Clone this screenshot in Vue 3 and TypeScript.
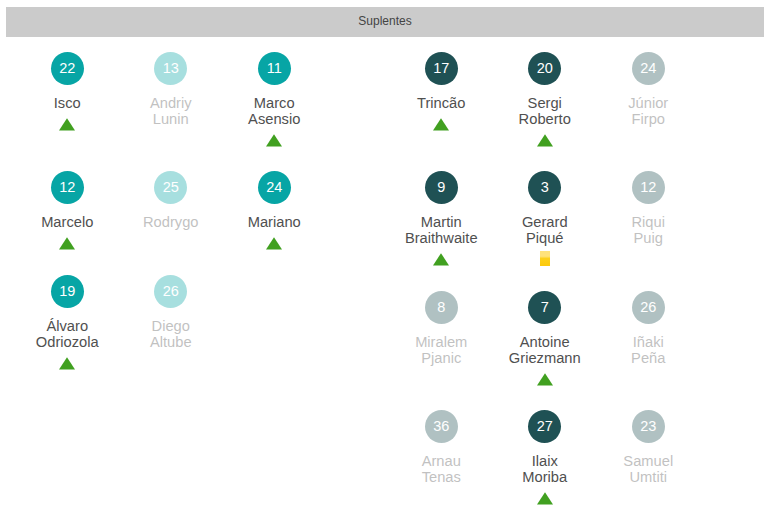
<script setup lang="ts">
type Mark = 'up' | 'card' | 'none'
interface Player { n: number; lines: string[]; mark: Mark }
const p = (n: number, name: string, mark: Mark = 'none'): Player => ({ n, lines: name.split('|'), mark })
const home: Player[] = [
  p(22, 'Isco', 'up'), p(13, 'Andriy|Lunin'), p(11, 'Marco|Asensio', 'up'),
  p(12, 'Marcelo', 'up'), p(25, 'Rodrygo'), p(24, 'Mariano', 'up'),
  p(19, 'Álvaro|Odriozola', 'up'), p(26, 'Diego|Altube'),
]
const away: Player[] = [
  p(17, 'Trincão', 'up'), p(20, 'Sergi|Roberto', 'up'), p(24, 'Júnior|Firpo'),
  p(9, 'Martin|Braithwaite', 'up'), p(3, 'Gerard|Piqué', 'card'), p(12, 'Riqui|Puig'),
  p(8, 'Miralem|Pjanic'), p(7, 'Antoine|Griezmann', 'up'), p(26, 'Iñaki|Peña'),
  p(36, 'Arnau|Tenas'), p(27, 'Ilaix|Moriba', 'up'), p(23, 'Samuel|Umtiti'),
]
const teams = [
  { key: 'home', cls: 'home', players: home },
  { key: 'away', cls: 'away', players: away },
]
</script>

<template>
  <div class="page">
    <div class="title">Suplentes</div>
    <div class="teams">
      <div v-for="t in teams" :key="t.key" class="team" :class="t.cls">
        <div
          v-for="pl in t.players"
          :key="pl.n + pl.lines[0]"
          class="player"
          :class="{ out: pl.mark === 'none' }"
        >
          <div class="num">{{ pl.n }}</div>
          <div class="name">
            <div v-for="l in pl.lines" :key="l">{{ l }}</div>
          </div>
          <svg v-if="pl.mark === 'up'" class="up" width="18" height="13" viewBox="0 0 18 13">
            <path d="M9 0.2 L17 12.4 L1 12.4 Z" fill="#41a020" />
          </svg>
          <div v-else-if="pl.mark === 'card'" class="card"></div>
        </div>
      </div>
    </div>
  </div>
</template>

<style>
html, body { margin: 0; background: #fff; }
</style>

<style scoped>
.page {
  width: 770px;
  height: 525px;
  box-sizing: border-box;
  padding: 7px 6px 0;
  font-family: "Liberation Sans", Arial, sans-serif;
  overflow: hidden;
}
.title {
  height: 30px;
  line-height: 28px;
  background: #cbcbcb;
  color: #444;
  font-size: 12px;
  text-align: center;
}
.teams {
  display: flex;
  padding-top: 15px;
}
.team {
  display: grid;
  grid-template-columns: repeat(3, 103.5px);
  row-gap: 24.5px;
  align-content: start;
  align-items: start;
}
.home { padding-left: 9.5px; }
.away { padding-left: 63.5px; }
.player {
  display: flex;
  flex-direction: column;
  align-items: center;
  color: #505050;
}
.num {
  width: 33px;
  height: 33px;
  border-radius: 50%;
  color: #fff;
  font-size: 14.5px;
  line-height: 33px;
  text-align: center;
  margin-bottom: 9.8px;
}
.home .num { background: #07a5a5; }
.away .num { background: #1f5154; }
.out .name { opacity: 0.35; }
.out .num { opacity: 0.35; }
.name {
  font-size: 14.7px;
  line-height: 16px;
  text-align: center;
}
.up { margin-top: 7.2px; display: block; }
.card {
  margin-top: 4.7px;
  width: 10px;
  height: 15.5px;
  background: linear-gradient(#ffe27a 0 35%, #fdd01a 50%, #fcc90c 100%);
}
</style>
